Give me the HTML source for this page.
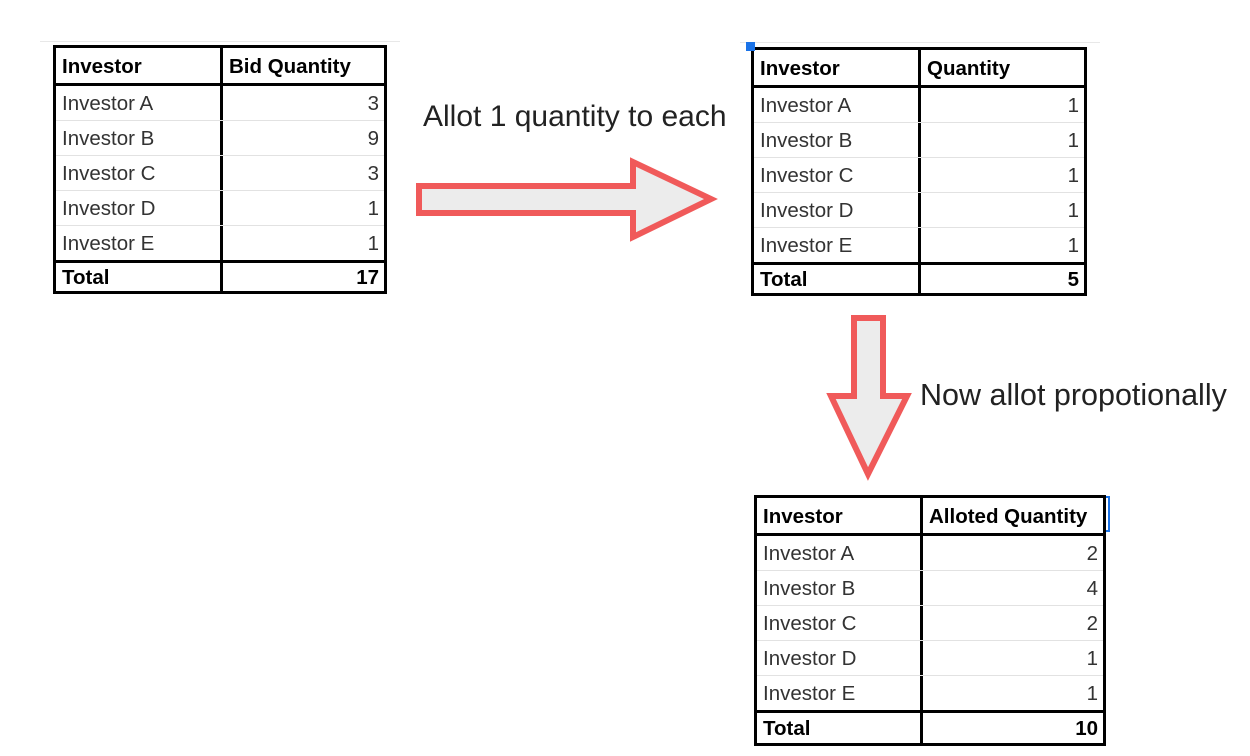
<!DOCTYPE html>
<html><head><meta charset="utf-8"><style>
body{margin:0;width:1250px;height:756px;background:#fff;position:relative;overflow:hidden;font-family:"Liberation Sans",Arial,sans-serif}
.t{position:absolute;border:3px solid #000;box-sizing:border-box;background:#fff;display:flex;flex-direction:column}
.r{position:relative;display:flex;box-sizing:border-box;border-bottom:1px solid #e2e2e2;flex:none}
.r div{box-sizing:border-box;padding:2px 5px 0 6px;display:flex;align-items:center;font-size:20.5px;color:#333}
.r div:first-child{border-right:3px solid #000}
.r div:last-child{justify-content:flex-end;flex:1}
.h{border-bottom:3px solid #000}
.h div,.tot div{font-weight:bold;color:#000;justify-content:flex-start!important;font-size:20.5px}
.tot{border-top:3px solid #000;border-bottom:none;flex:1}
.tot div:last-child{justify-content:flex-end!important}
.lbl{position:absolute;font-size:30px;color:#222;white-space:nowrap}
.g{position:absolute;background:#e8e8e8}
</style></head><body>
<div class="g" style="left:40px;top:41px;width:360px;height:1px"></div>
<div class="g" style="left:740px;top:42px;width:360px;height:1px"></div>

<div class="t" style="left:53px;top:45px;width:334px;height:249px">
<div class="r h" style="height:38px"><div style="width:167px">Investor</div><div style="justify-content:flex-start">Bid Quantity</div></div>
<div class="r" style="height:35px"><div style="width:167px">Investor A</div><div>3</div></div>
<div class="r" style="height:35px"><div style="width:167px">Investor B</div><div>9</div></div>
<div class="r" style="height:35px"><div style="width:167px">Investor C</div><div>3</div></div>
<div class="r" style="height:35px"><div style="width:167px">Investor D</div><div>1</div></div>
<div class="r" style="height:34px;border-bottom:none"><div style="width:167px">Investor E</div><div>1</div></div>
<div class="r tot"><div style="width:167px">Total</div><div>17</div></div>
</div>

<div class="t" style="left:751px;top:47px;width:336px;height:249px">
<div class="r h" style="height:38px"><div style="width:167px">Investor</div><div style="justify-content:flex-start">Quantity</div></div>
<div class="r" style="height:35px"><div style="width:167px">Investor A</div><div>1</div></div>
<div class="r" style="height:35px"><div style="width:167px">Investor B</div><div>1</div></div>
<div class="r" style="height:35px"><div style="width:167px">Investor C</div><div>1</div></div>
<div class="r" style="height:35px"><div style="width:167px">Investor D</div><div>1</div></div>
<div class="r" style="height:34px;border-bottom:none"><div style="width:167px">Investor E</div><div>1</div></div>
<div class="r tot"><div style="width:167px">Total</div><div>5</div></div>
</div>
<div style="position:absolute;left:746px;top:42px;width:9px;height:9px;background:#1a73e8"></div>

<div class="t" style="left:754px;top:495px;width:352px;height:251px">
<div class="r h" style="height:38px"><div style="width:166px">Investor</div><div style="justify-content:flex-start">Alloted Quantity</div></div>
<div class="r" style="height:35px"><div style="width:166px">Investor A</div><div>2</div></div>
<div class="r" style="height:35px"><div style="width:166px">Investor B</div><div>4</div></div>
<div class="r" style="height:35px"><div style="width:166px">Investor C</div><div>2</div></div>
<div class="r" style="height:35px"><div style="width:166px">Investor D</div><div>1</div></div>
<div class="r" style="height:34px;border-bottom:none"><div style="width:166px">Investor E</div><div>1</div></div>
<div class="r tot"><div style="width:166px">Total</div><div>10</div></div>
</div>
<div style="position:absolute;left:1106px;top:496px;width:4px;height:36px;border:2px solid #1a73e8;border-left:none;box-sizing:border-box"></div>

<div class="lbl" style="left:423px;top:100px">Allot 1 quantity to each</div>
<div class="lbl" style="left:920px;top:378px;font-size:30.5px">Now allot propotionally</div>

<svg style="position:absolute;left:0;top:0" width="1250" height="756">
<path d="M419 186 H633 V162 L711 199 L633 237 V213 H419 Z" fill="#ececec" stroke="#f05a5a" stroke-width="6" stroke-linejoin="miter"/>
<path d="M854 318 H883 V396 H907 L868 474 L831 396 H854 Z" fill="#ececec" stroke="#f05a5a" stroke-width="6" stroke-linejoin="miter"/>
</svg>
</body></html>
